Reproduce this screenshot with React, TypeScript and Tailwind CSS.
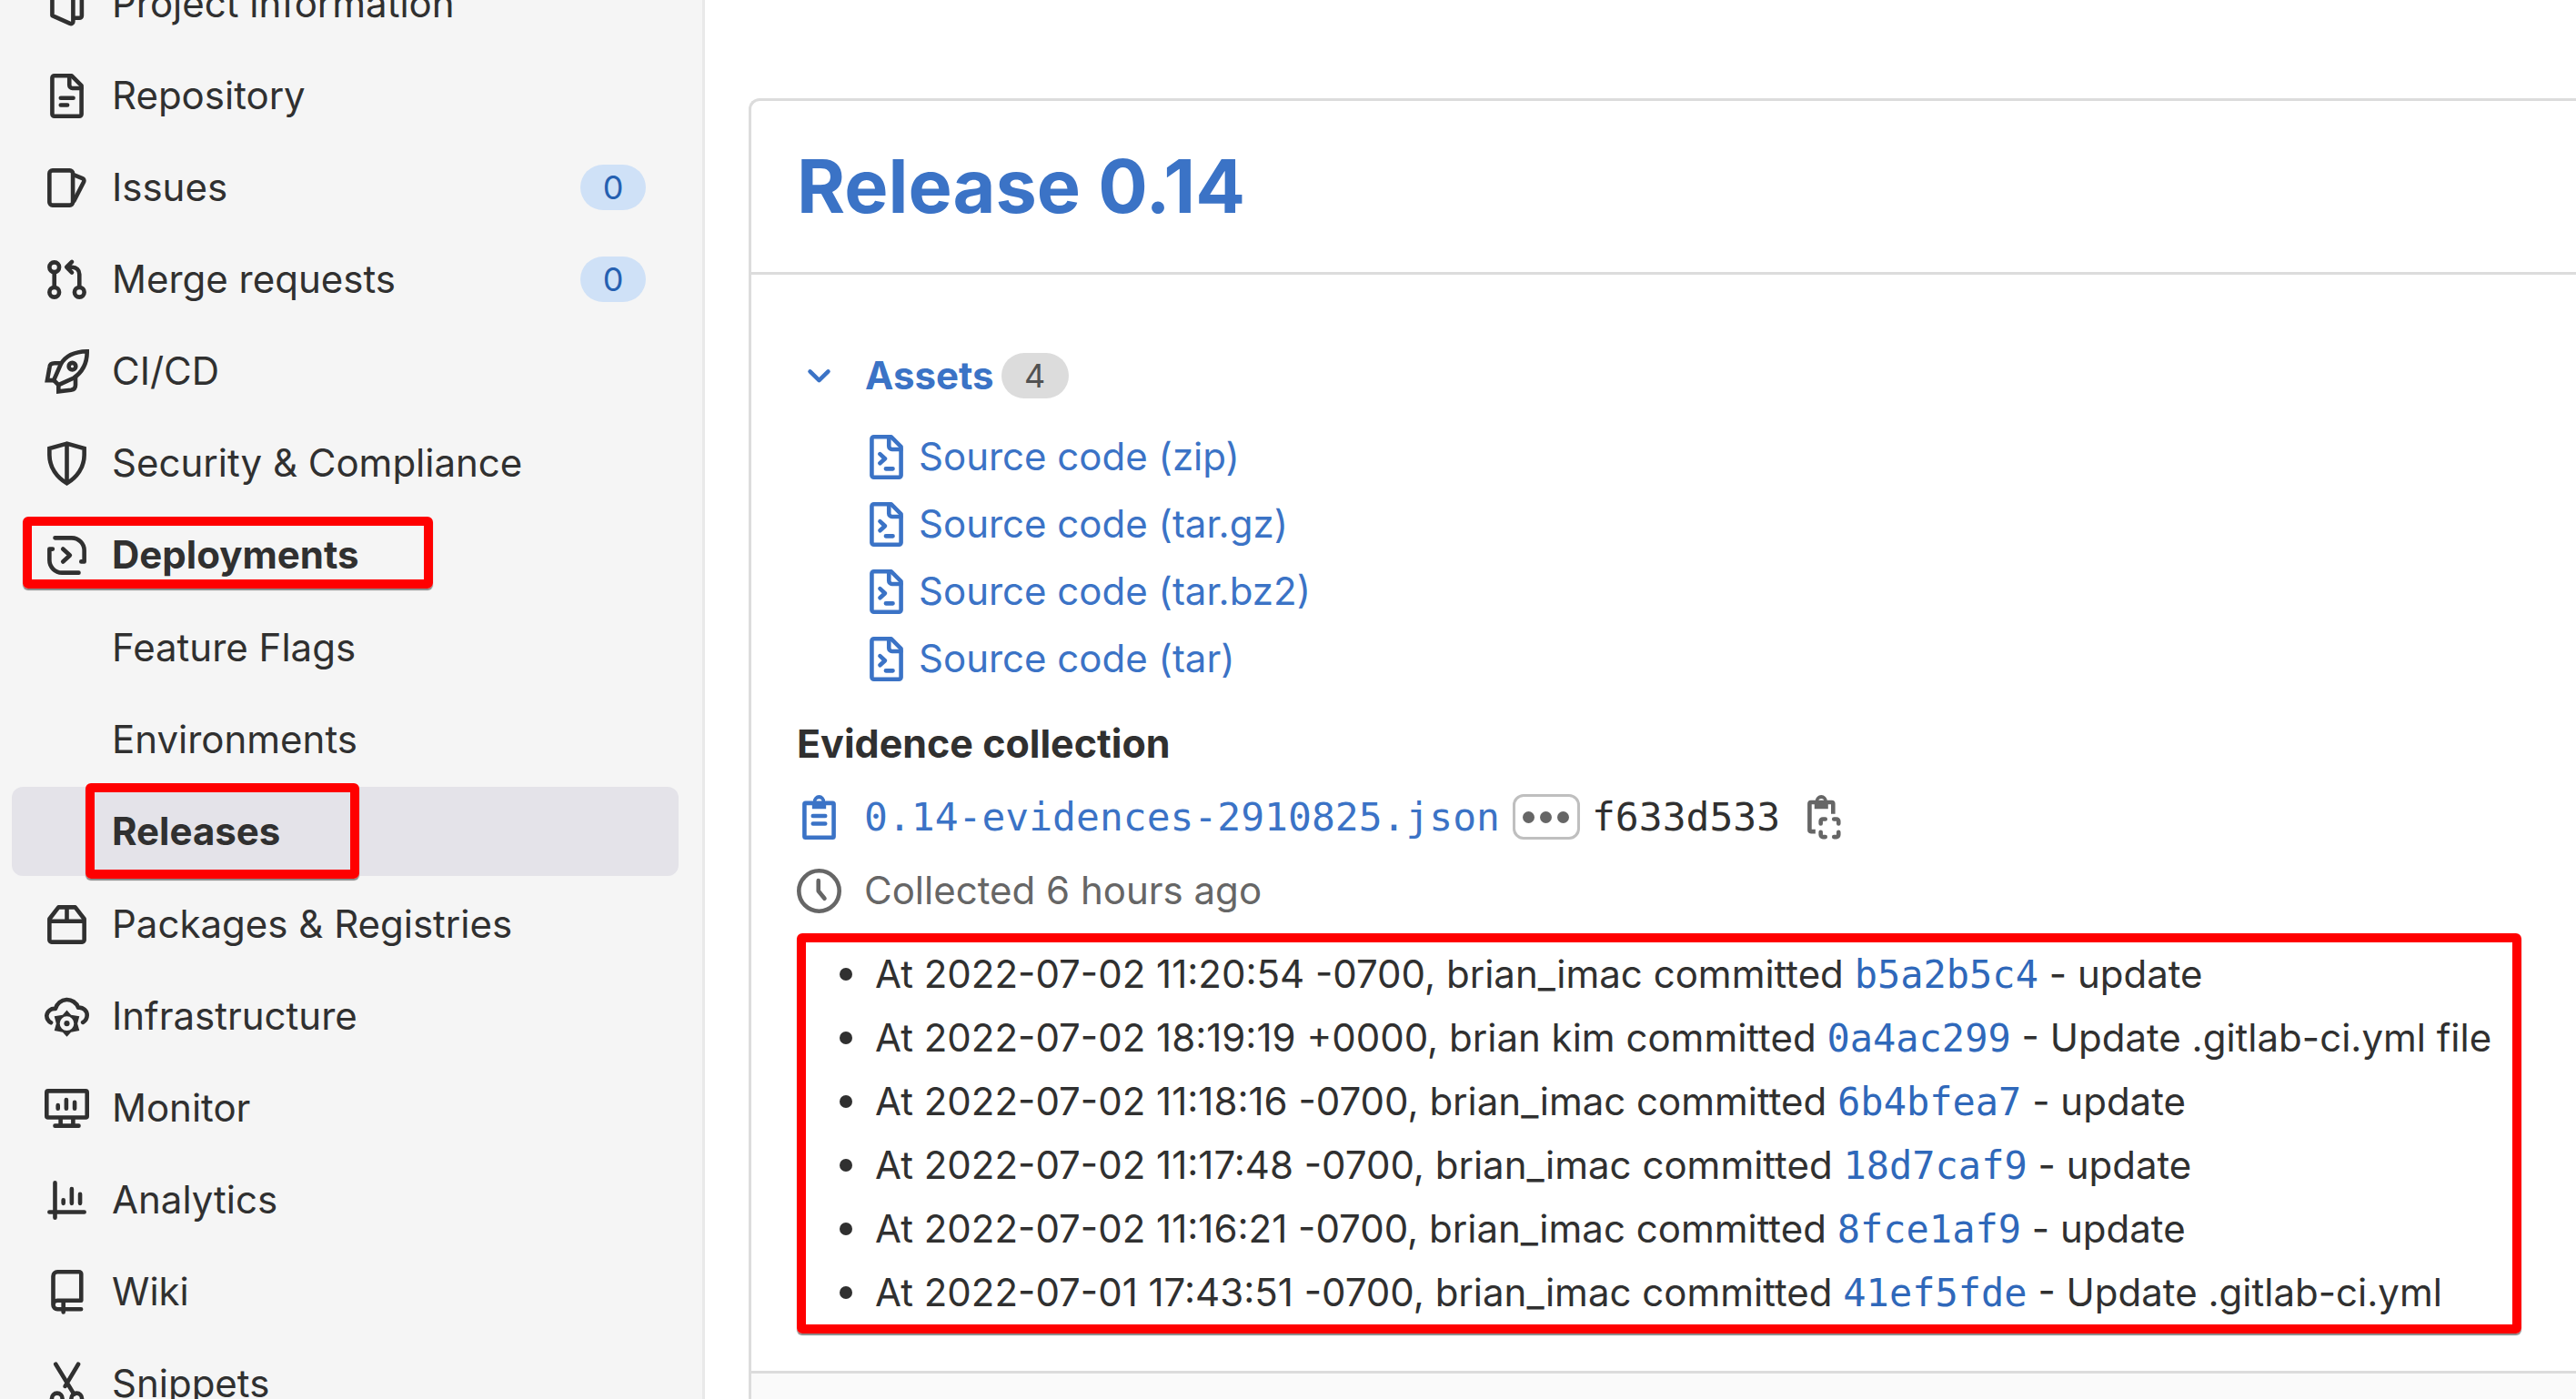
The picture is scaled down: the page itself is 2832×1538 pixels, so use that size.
import type { ReactNode } from "react";

function Icon({ children }: { children: ReactNode }) {
  return (
    <svg
      viewBox="0 0 16 16"
      className="size-[49px] shrink-0"
      fill="none"
      stroke="currentColor"
      strokeWidth={1.5}
      strokeLinecap="round"
      strokeLinejoin="round"
      aria-hidden="true"
    >
      {children}
    </svg>
  );
}

const ProjectIcon = () => (
  <Icon>
    <path d="M2.75 2v10.1l6.4 2.9a.8.8 0 0 0 1.1-.75V4.2L3.5.9a.5.5 0 0 0-.75.5ZM10.25 13h2.25a.85.85 0 0 0 .85-.85V1.75a.85.85 0 0 0-.85-.85H3.5" />
  </Icon>
);

const PageOutline = () => (
  <>
    <path d="M9.75.75H3.5a.75.75 0 0 0-.75.75v13c0 .41.34.75.75.75h9a.75.75 0 0 0 .75-.75V4.25Z" />
    <path d="M8.9 1v3.1c0 .6.5 1.1 1.1 1.1h3.2" />
  </>
);

const RepositoryIcon = () => (
  <Icon>
    <PageOutline />
    <path d="M5.8 8.75h4.5M5.8 11.25h2.4" />
  </Icon>
);

const SourceIcon = () => (
  <Icon>
    <PageOutline />
    <path d="m5.7 6.9 1.8 1.65-1.8 1.65M7.8 12.2h2.5" />
  </Icon>
);

const IssuesIcon = () => (
  <Icon>
    <rect x="1.75" y="1.75" width="8.4" height="12.5" rx="1.1" />
    <path d="m10.6 3.4 3 1.2c.5.2.7.7.5 1.2L10.6 12.6" />
  </Icon>
);

const MergeIcon = () => (
  <Icon>
    <circle cx="3.5" cy="3.5" r="1.75" />
    <circle cx="3.5" cy="12.5" r="1.75" />
    <circle cx="12.5" cy="12.5" r="1.75" />
    <path d="M3.5 5.5v5M12.5 10.5V6A2.5 2.5 0 0 0 10 3.5H8.2M9.8 1.6 7.9 3.5l1.9 1.9" />
  </Icon>
);

const RocketIcon = () => (
  <Icon>
    <g strokeLinejoin="miter">
      <path d="M15.25.75C10.6.85 7.4 2.5 5.8 5.4L3.3 11.1 5 12.8l5.3-2.4C13.6 8.2 15.3 5.2 15.25.75Z" />
      <path d="M5.7 5H3.6c-1 0-1.7.5-1.8 1.4L.95 11.15H3.3M5 12.8v2.35l4.5-.55c1-.15 1.6-.9 1.6-1.8V10.1" />
    </g>
    <circle cx="9.95" cy="6.1" r="1.25" />
  </Icon>
);

const ShieldIcon = () => (
  <Icon>
    <g strokeLinejoin="miter">
      <path d="M8 .85 1.75 2.6V5c0 4.4 2.7 8 6.25 10.1C11.55 13 14.25 9.4 14.25 5V2.6ZM8 .85v14.25" />
    </g>
  </Icon>
);

const DeployIcon = () => (
  <Icon>
    <path d="M3.75 1.75h6a4.5 4.5 0 0 1 4.5 4.5v4h-1.1M2.9 5.75H1.75v4a4.5 4.5 0 0 0 4.5 4.5h6M6.6 5.7l2.5 2.3-2.5 2.3" />
  </Icon>
);

const PackageIcon = () => (
  <Icon>
    <path d="M5 1.75h6l3.25 4.2v7.55a.75.75 0 0 1-.75.75h-11a.75.75 0 0 1-.75-.75V5.95ZM1.75 6.75h12.5M8 1.75v5" />
  </Icon>
);

const InfraIcon = () => (
  <Icon>
    <path d="M2.3 10.2A3 3 0 0 1 .75 7.7 2.8 2.8 0 0 1 3.9 5.2 4.3 4.3 0 0 1 12.1 4.8a2.8 2.8 0 0 1 3.15 2.8 3 3 0 0 1-1.5 2.5" />
    <path
      fill="currentColor"
      stroke="none"
      fillRule="evenodd"
      d="M8 5.7 9.5 7.4 12.5 7.9 11.8 10.5 12.5 13.1 9.5 13.6 8 15.3 6.5 13.6 3.5 13.1 4.2 10.5 3.5 7.9 6.5 7.4ZM8 7.95a2.55 2.55 0 1 0 0 5.1 2.55 2.55 0 0 0 0-5.1Z"
    />
    <circle cx="8" cy="10.5" r="1" fill="currentColor" stroke="none" />
  </Icon>
);

const MonitorIcon = () => (
  <Icon>
    <rect x=".75" y="1.75" width="14.5" height="9.5" rx=".5" />
    <path d="M5.75 11.5v2.5M10.25 11.5v2.5M3.75 14.25h8.5M4.8 6.9v1.2M7.8 4.9v3.2M10.8 5.8v2.3" />
  </Icon>
);

const AnalyticsIcon = () => (
  <Icon>
    <path d="M3.75 1.75v12.5M1.75 12.25h12.5M6.75 7.9v1.2M9.75 3.9v5.2M12.75 5.8v3.3" />
  </Icon>
);

const WikiIcon = () => (
  <Icon>
    <path d="M3.1 12.6V2.25c0-.8.7-1.5 1.5-1.5h7.8c.4 0 .75.3.75.75V11H4.6c-.8 0-1.5.7-1.5 1.55s.7 1.55 1.5 1.55h8.5M6.75 11v4.2" />
  </Icon>
);

const SnippetIcon = () => (
  <Icon>
    <path d="m4 .9 6.6 10.8M12.1.9 7.4 8.8" />
    <circle cx="4.5" cy="13.2" r="1.9" />
    <circle cx="11.5" cy="13.2" r="1.9" />
  </Icon>
);

const ChevronIcon = () => (
  <Icon>
    <path d="M4.75 6.35 8 9.5l3.25-3.15" />
  </Icon>
);

const ClipboardIcon = () => (
  <Icon>
    <rect x="2.75" y="2.9" width="10.5" height="12.35" rx=".4" />
    <path
      fill="currentColor"
      stroke="none"
      fillRule="evenodd"
      d="M8 0a2.2 2.2 0 0 1 2.15 2.3h.35V5h-5V2.3h.35A2.2 2.2 0 0 1 8 0Zm0 1.4a1 1 0 1 0 0 2 1 1 0 0 0 0-2Z"
    />
    <path d="M5.8 7.5h4.4M5.8 10.3h4.4" />
  </Icon>
);

const CopyIcon = () => (
  <Icon>
    <path strokeLinecap="butt" d="M11.2 6.8V3.1a.5.5 0 0 0-.5-.5H3.25a.5.5 0 0 0-.5.5v9.5c0 .3.2.5.5.5h1.6" />
    <path
      fill="currentColor"
      stroke="none"
      fillRule="evenodd"
      d="M6.95 0A2.2 2.2 0 0 1 9.1 2.1h.3V5H4.5V2.1h.3A2.2 2.2 0 0 1 6.95 0Zm0 1.3a1 1 0 1 0 0 2 1 1 0 0 0 0-2Z"
    />
    <path d="M6.75 10.3v-.9c0-.4.3-.75.75-.75h.9M11.5 8.65h.9c.4 0 .75.3.75.75v.9M13.15 13.3v1c0 .4-.3.75-.75.75h-.9M8.4 15.05h-.9a.75.75 0 0 1-.75-.75v-1" />
  </Icon>
);

const ClockIcon = () => (
  <Icon>
    <circle cx="8" cy="8" r="7.25" />
    <path d="M7.75 4.3V8l2.2 2.7" />
  </Icon>
);

function Highlight({ className }: { className: string }) {
  return (
    <span
      className={`pointer-events-none absolute rounded-md border-[10px] border-[#ff0000] shadow-[0_2px_1px_#888888] ${className}`}
    />
  );
}

type Item = {
  label: string;
  icon: () => ReactNode;
  count?: number;
  children?: { label: string; active?: boolean }[];
};

const items: Item[] = [
  { label: "Project information", icon: ProjectIcon },
  { label: "Repository", icon: RepositoryIcon },
  { label: "Issues", icon: IssuesIcon, count: 0 },
  { label: "Merge requests", icon: MergeIcon, count: 0 },
  { label: "CI/CD", icon: RocketIcon },
  { label: "Security & Compliance", icon: ShieldIcon },
  {
    label: "Deployments",
    icon: DeployIcon,
    children: [{ label: "Feature Flags" }, { label: "Environments" }, { label: "Releases", active: true }],
  },
  { label: "Packages & Registries", icon: PackageIcon },
  { label: "Infrastructure", icon: InfraIcon },
  { label: "Monitor", icon: MonitorIcon },
  { label: "Analytics", icon: AnalyticsIcon },
  { label: "Wiki", icon: WikiIcon },
  { label: "Snippets", icon: SnippetIcon },
];

function Sidebar() {
  return (
    <aside className="w-[775px] shrink-0 border-r-[3px] border-[#e9e9e9] bg-[#f5f5f5] pr-[26px] pl-[13px]">
      <ul className="-mt-[45px] flex flex-col gap-[3px]">
        {items.map(({ label, icon: ItemIcon, count, children }) => (
          <li key={label}>
            <a
              href="#"
              className={`relative flex h-[98px] items-center gap-[25px] px-9 ${children ? "font-bold" : ""}`}
            >
              <ItemIcon />
              <span className="grow">{label}</span>
              {count !== undefined && (
                <span className="flex h-[50px] w-[72px] items-center justify-center rounded-full bg-[#cfe1f7] text-[36px] text-[#2560b1]">
                  {count}
                </span>
              )}
              {children && <Highlight className="top-[7px] left-3 h-[79px] w-[451px]" />}
            </a>
            {children && (
              <ul className="mt-1 flex flex-col gap-[3px] pb-px">
                {children.map((child) => (
                  <li key={child.label}>
                    <a
                      href="#"
                      className={`relative flex h-[98px] items-center rounded-xl pl-[110px] ${
                        child.active ? "bg-[#e4e3e9] font-bold" : ""
                      }`}
                    >
                      {child.label}
                      {child.active && <Highlight className="-top-1 left-[81px] h-[105px] w-[301px]" />}
                    </a>
                  </li>
                ))}
              </ul>
            )}
          </li>
        ))}
      </ul>
    </aside>
  );
}

const sources = ["zip", "tar.gz", "tar.bz2", "tar"];

const commits = [
  ["2022-07-02 11:20:54 -0700", "brian_imac", "b5a2b5c4", "update"],
  ["2022-07-02 18:19:19 +0000", "brian kim", "0a4ac299", "Update .gitlab-ci.yml file"],
  ["2022-07-02 11:18:16 -0700", "brian_imac", "6b4bfea7", "update"],
  ["2022-07-02 11:17:48 -0700", "brian_imac", "18d7caf9", "update"],
  ["2022-07-02 11:16:21 -0700", "brian_imac", "8fce1af9", "update"],
  ["2022-07-01 17:43:51 -0700", "brian_imac", "41ef5fde", "Update .gitlab-ci.yml"],
];

function Release() {
  return (
    <article className="mt-[108px] ml-12 flex grow flex-col rounded-tl-xl border-t-[3px] border-l-[3px] border-[#dcdcdc]">
      <header className="flex h-[191px] items-center border-b-[3px] border-[#dcdcdc] px-[50px]">
        <h2 className="text-[81px] leading-none font-bold text-[#3b73c6]">
          <a href="#">Release 0.14</a>
        </h2>
      </header>

      <div className="px-[50px] pt-[86px] pb-[41px]">
        <button type="button" className="flex h-[50px] items-center text-[#3b73c6]">
          <ChevronIcon />
          <span className="ml-[26px] font-bold">Assets</span>
          <span className="ml-2 flex h-[50px] w-[74px] items-center justify-center rounded-full bg-[#dcdcdc] text-[36px] text-[#525252]">
            4
          </span>
        </button>

        <ul className="mt-[27px] pl-[74px]">
          {sources.map((ext) => (
            <li key={ext}>
              <a href="#" className="flex h-[74px] w-fit items-center gap-[11px] text-[#3b73c6]">
                <SourceIcon />
                Source code ({ext})
              </a>
            </li>
          ))}
        </ul>

        <h3 className="mt-[25px] text-[43px] leading-[62px] font-bold">Evidence collection</h3>

        <div className="mt-[25px] flex h-[50px] items-center font-['DejaVu_Sans_Mono',monospace] text-[43px]">
          <a href="#" className="flex items-center gap-[25px] text-[#3b73c6]">
            <ClipboardIcon />
            0.14-evidences-2910825.json
          </a>
          <button
            type="button"
            aria-label="Show full hash"
            className="mr-[13px] ml-3.5 flex h-[50px] w-[74px] items-center justify-center gap-1.5 rounded-[12px] border-[3px] border-[#bfbfbf]"
          >
            <span className="size-[13px] rounded-full bg-[#666666]" />
            <span className="size-[13px] rounded-full bg-[#666666]" />
            <span className="size-[13px] rounded-full bg-[#666666]" />
          </button>
          <span>f633d533</span>
          <button type="button" aria-label="Copy evidence SHA" className="ml-6 text-[#666666]">
            <CopyIcon />
          </button>
        </div>

        <div className="mt-[31px] flex h-[50px] items-center gap-[25px] text-[#666666]">
          <ClockIcon />
          Collected 6 hours ago
        </div>

        <div className="mt-[22px] mr-2.5 rounded-md border-[10px] border-[#ff0000] shadow-[0_2px_1px_#888888]">
          <ul>
            {commits.map(([date, author, sha, message]) => (
              <li key={sha} className="flex h-[70px] items-center whitespace-pre">
                <span className="mr-[25px] ml-[37px] size-3.5 rounded-full bg-[#303030]" />
                <span>
                  At {date}, {author} committed{" "}
                  <a href="#" className="font-['DejaVu_Sans_Mono',monospace] text-[42px] text-[#2f68ba]">
                    {sha}
                  </a>{" "}
                  - {message}
                </span>
              </li>
            ))}
          </ul>
        </div>
      </div>

      <footer className="grow border-t-[3px] border-[#dcdcdc] bg-[#fafafa]" />
    </article>
  );
}

export default function App() {
  return (
    <div className="flex h-screen overflow-hidden bg-white font-['Inter',sans-serif] text-[42px] leading-none text-[#303030]">
      <Sidebar />
      <main className="flex min-w-0 grow flex-col">
        <Release />
      </main>
    </div>
  );
}
